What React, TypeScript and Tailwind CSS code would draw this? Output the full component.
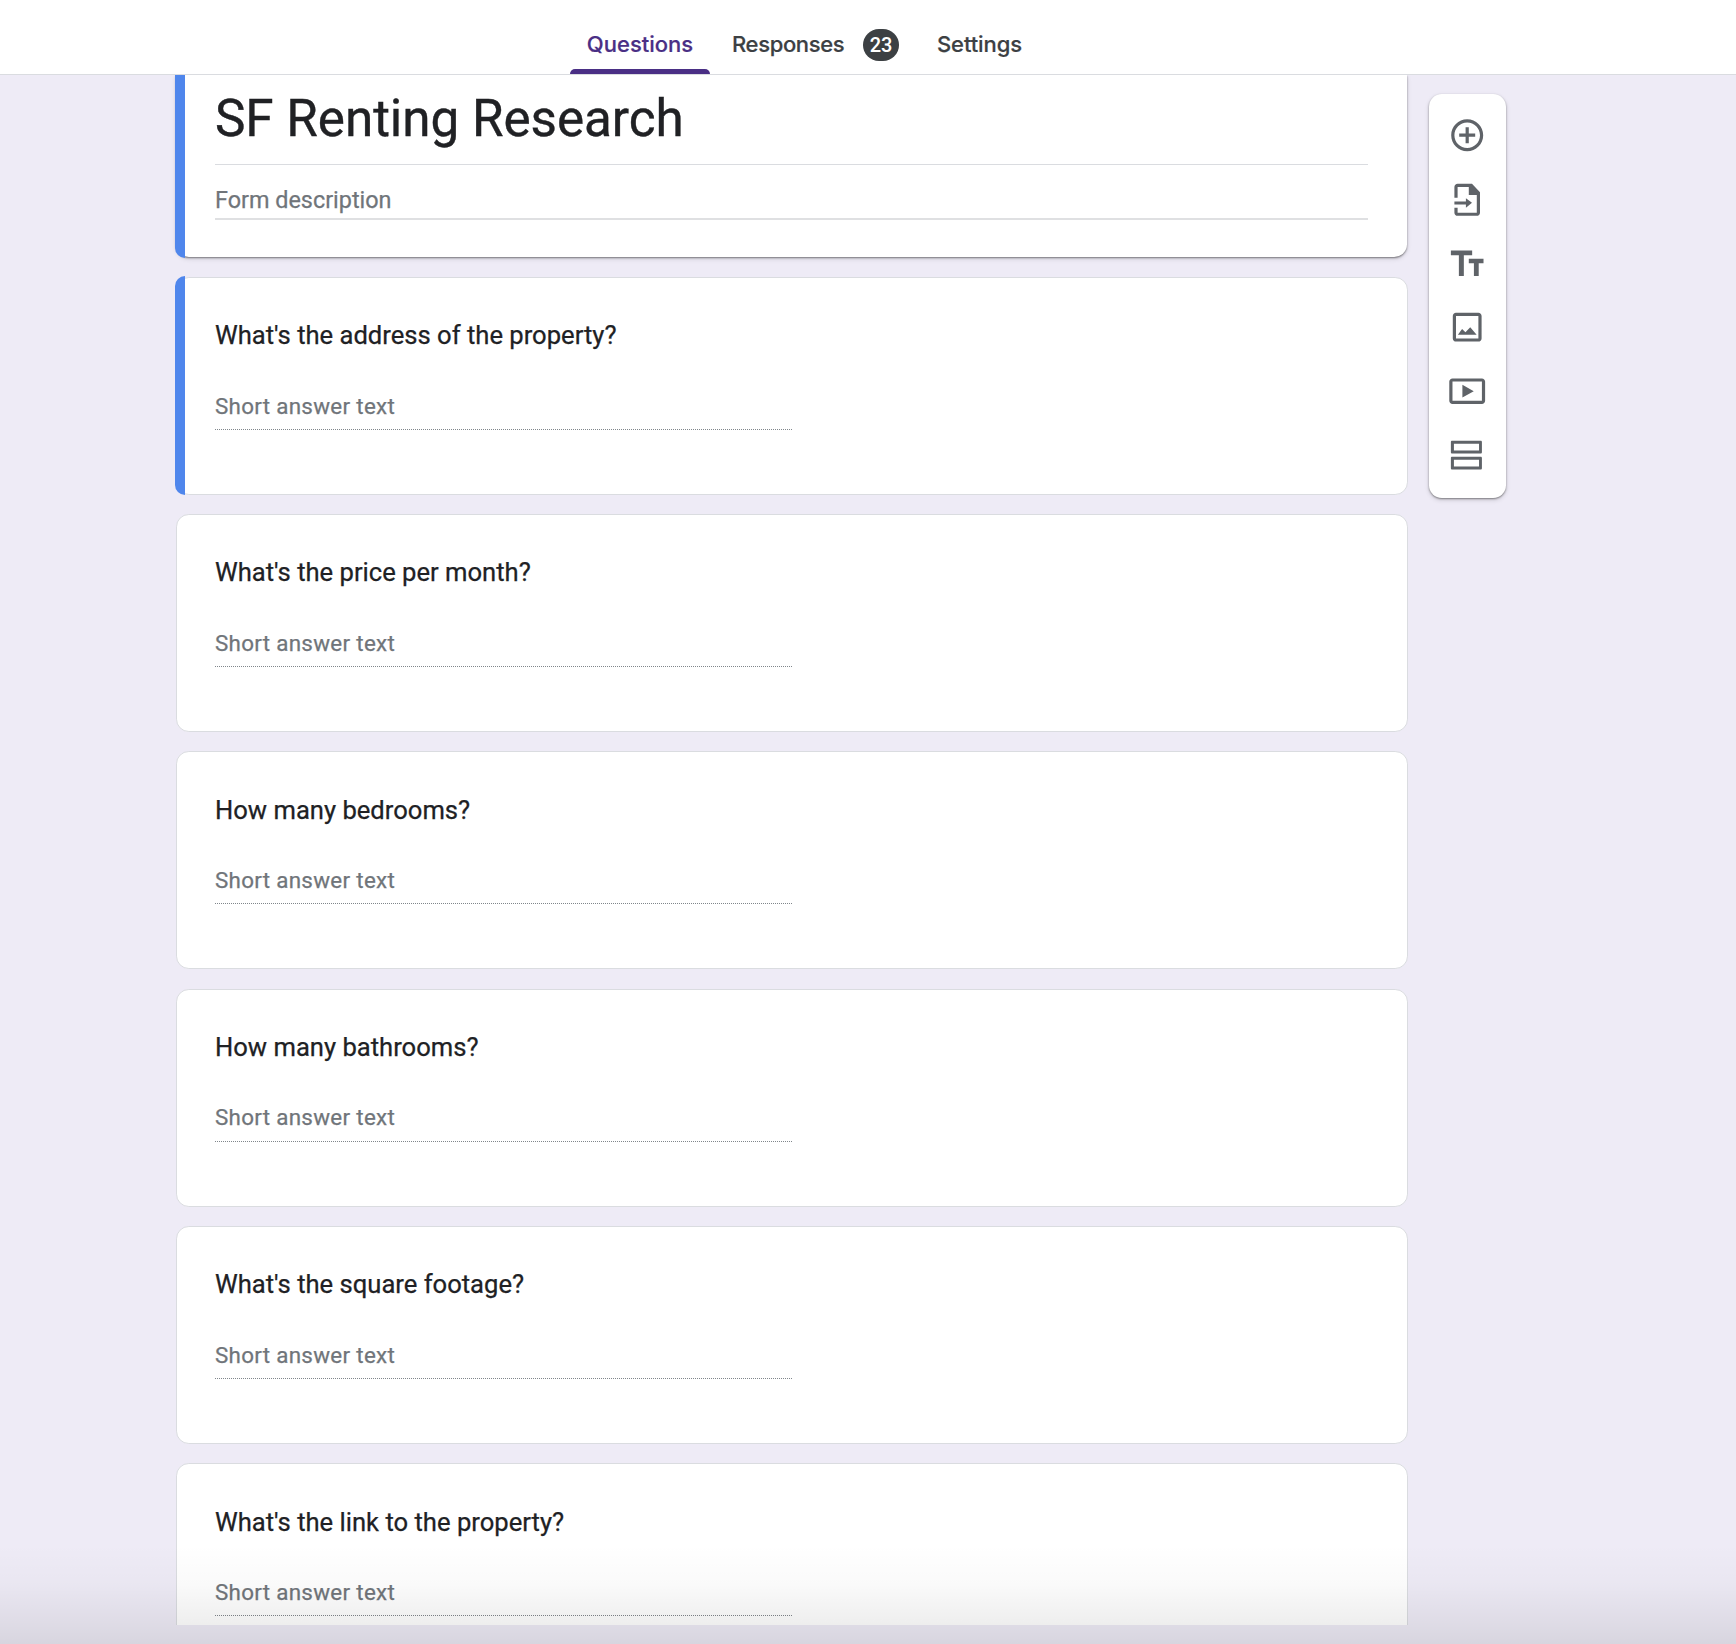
import React from "react";

const questions = [
  "What's the address of the property?",
  "What's the price per month?",
  "How many bedrooms?",
  "How many bathrooms?",
  "What's the square footage?",
  "What's the link to the property?",
];

const tools: { label: string; path: string }[] = [
  {
    label: "Add question",
    path: "M13 7h-2v4H7v2h4v4h2v-4h4v-2h-4V7zm-1-5C6.48 2 2 6.48 2 12s4.48 10 10 10 10-4.48 10-10S17.52 2 12 2zm0 18c-4.41 0-8-3.59-8-8s3.59-8 8-8 8 3.59 8 8-3.59 8-8 8z",
  },
  {
    label: "Import questions",
    path: "M4 11.1V4.4c0-1.1.9-2 2-2h9l5 5.2v12.8c0 1.1-.9 2-2 2H6c-1.1 0-2-.9-2-2v-3h2v3h12v-11h-5v-5H6v6.7zM4 13.4h7.2v-2l3.8 2.9-3.8 3v-2H4z",
  },
  {
    label: "Add title and description",
    path: "M1.8 4v3h5v13h3.1V7h5.2V4zM13 9.2V12h3.2v8h3v-8h3V9.2z",
  },
  {
    label: "Add image",
    path: "M19 5v14H5V5h14m0-2H5c-1.1 0-2 .9-2 2v14c0 1.1.9 2 2 2h14c1.1 0 2-.9 2-2V5c0-1.1-.9-2-2-2zM6.2 16.8l2.6-3.6 2.1 2 3-3.2 4 4.8z",
  },
  {
    label: "Add video",
    path: "M21.2 4H2.8c-1.1 0-2 .9-2 2v12c0 1.1.9 2 2 2h18.4c1.1 0 2-.9 2-2V6c0-1.1-.9-2-2-2zm0 14H2.8V6h18.4zM9 8v8l7.1-4z",
  },
  {
    label: "Add section",
    path: "M20.4 13H2.6c-.5 0-.8.3-.8.8v6.4c0 .5.3.8.8.8h17.8c.5 0 .8-.3.8-.8v-6.4c0-.5-.3-.8-.8-.8zm-1 6.1H3.7v-4.2h15.7zM20.4 3H2.6c-.5 0-.8.3-.8.8v6.4c0 .5.3.8.8.8h17.8c.5 0 .8-.3.8-.8V3.8c0-.5-.3-.8-.8-.8zm-1 6.1H3.7V4.9h15.7z",
  },
];

function Header() {
  return (
    <header className="relative z-10 flex h-[75px] items-stretch border-b border-[#dadce0] bg-white pl-[570px] font-['Inter',sans-serif] text-[22px] font-medium text-[#3c4043] [-webkit-text-stroke:0.2px]">
      <div className="flex w-[140px] flex-col items-center text-[#4a2f85]">
        <span className="mt-[28px] h-[41px] leading-[33px]">Questions</span>
        <span className="h-[5px] w-full rounded-t-[5px] bg-[#4a2f85]" />
      </div>
      <div className="ml-[22px] flex items-start pt-[28px] leading-[33px]">
        <span className="w-[131px] whitespace-nowrap tracking-[-0.35px]">Responses</span>
        <span className="mt-px flex h-8 w-9 items-center justify-center rounded-full bg-[#3c4043] pb-px text-white">
          <span className="text-[20px] leading-8 [font-family:Roboto,sans-serif] [-webkit-text-stroke:0]">23</span>
        </span>
        <span className="ml-[38px] tracking-[-0.1px]">Settings</span>
      </div>
    </header>
  );
}

function QuestionCard({ title, active }: { title: string; active: boolean }) {
  return (
    <section className="relative h-[218px] shrink-0 rounded-[12.8px] border border-[#dadce0] bg-white pl-[38px]">
      {active && (
        <span className="absolute -top-[2px] -bottom-px -left-[2px] w-[10px] rounded-l-[10px] bg-[#4f86ec]" />
      )}
      <h2 className="mt-[38.3px] text-[25.6px] leading-[38px] text-[#202124] [-webkit-text-stroke:0.25px]">{title}</h2>
      <div className="mt-[30.45px] h-[45.25px] w-[577px] border-b border-dotted border-[#80868b] text-[22.4px] leading-[43px] tracking-[0.3px] text-[#70757a] [-webkit-text-stroke:0.25px]">
        Short answer text
      </div>
    </section>
  );
}

export default function App() {
  return (
    <div className="relative flex h-[1644px] w-[1736px] flex-col overflow-hidden bg-[#eeebf6] font-['Roboto',sans-serif]">
      <Header />
      <div className="flex h-[1550px] shrink-0 items-start overflow-hidden pl-[175px]">
        <main className="flex w-[1233px] flex-col gap-[19.3px] pl-px">
          <section className="relative mb-[0.5px] h-[182px] w-[1231px] shrink-0 rounded-b-[12.8px] bg-white pr-[39px] pl-[39px] shadow-[0_1px_2px_rgba(0,0,0,0.45),0_2px_5px_rgba(0,0,0,0.12)]">
            <span className="absolute -top-px -bottom-px -left-px w-[10px] rounded-bl-[10px] bg-[#4f86ec]" />
            <h1 className="h-[90px] border-b border-[#dadce0] pt-[10px] text-[51.2px] leading-[68px] tracking-[-0.03px] text-[#202124] [-webkit-text-stroke:0.4px]">
              SF Renting Research
            </h1>
            <p className="h-[55px] border-b-2 border-[#dfe0e2] pt-[19px] text-[23.4px] leading-8 text-[#70757a] [-webkit-text-stroke:0.25px]">
              Form description
            </p>
          </section>
          {questions.map((title, i) => (
            <QuestionCard key={title} title={title} active={i === 0} />
          ))}
        </main>
        <aside className="mt-[19px] ml-[21px] flex h-[404px] w-[77px] flex-col items-center gap-[25.6px] rounded-[12.8px] bg-white pt-[22px] shadow-[0_1px_2px_rgba(0,0,0,0.42),0_2px_5px_rgba(0,0,0,0.14)]">
          {tools.map((tool) => (
            <svg
              key={tool.label}
              aria-label={tool.label}
              viewBox="0 0 24 24"
              className="size-[38.4px] shrink-0 fill-[#5f6368]"
            >
              <path fillRule="evenodd" d={tool.path} />
            </svg>
          ))}
        </aside>
      </div>
      <div className="pointer-events-none absolute inset-x-0 bottom-0 h-[100px] bg-[linear-gradient(to_bottom,rgba(0,0,0,0)_0%,rgba(0,0,0,0.02)_40%,rgba(0,0,0,0.065)_80%,rgba(0,0,0,0.095)_100%)]" />
    </div>
  );
}
